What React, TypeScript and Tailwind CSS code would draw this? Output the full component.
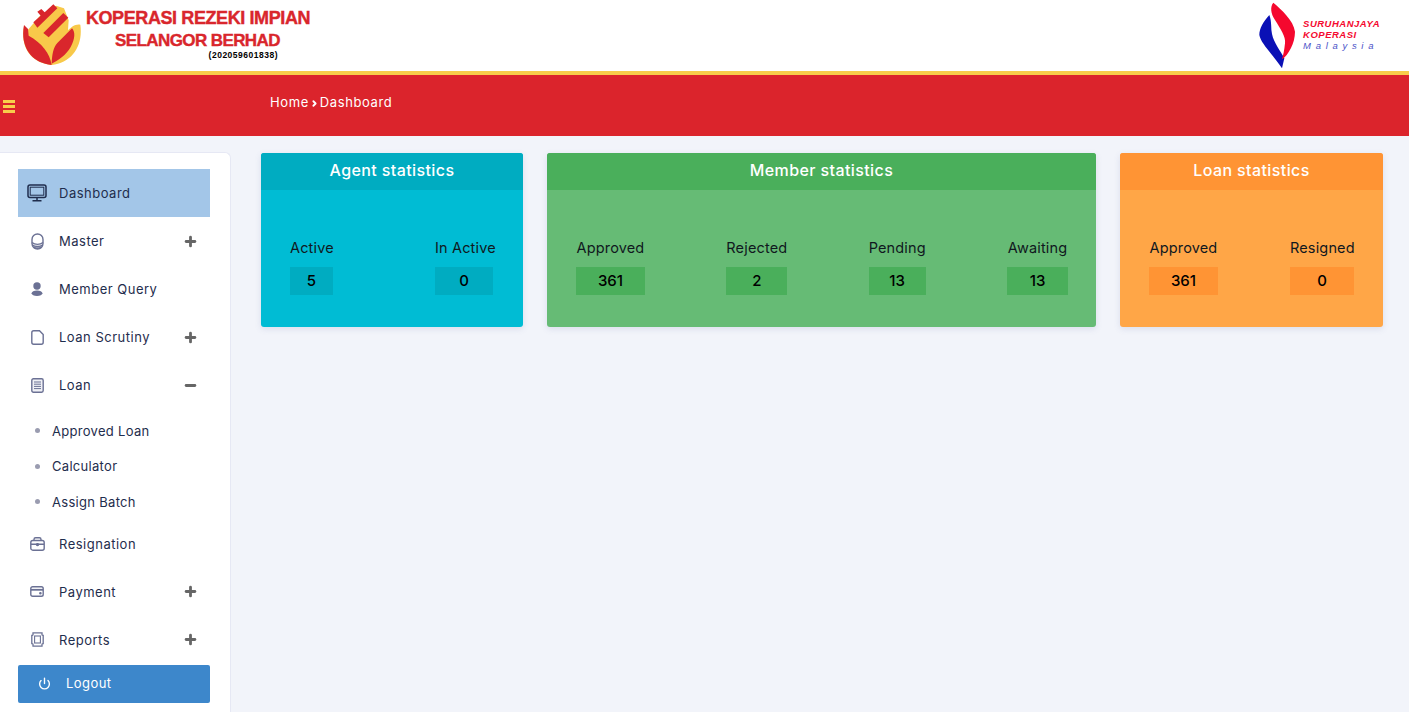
import React from "react";
import { Plus, Minus, Power, ChevronRight } from "lucide-react";

const font = "font-['Inter','Liberation_Sans',sans-serif]";

function LogoMark() {
  return (
    <svg width="60" height="64" viewBox="66 10 180 192" className="block">
      <path d="M72 78 C60 140 90 190 155 196 C215 190 250 140 241 75 C226 72 214 82 204 92 L206 62 L192 26 L168 18 L120 48 L84 90 Z" fill="#f8c94a" />
      <path d="M72 76 C60 140 92 190 155 196 C150 160 125 130 86 108 L84 88 Z" fill="#d9262c" />
      <path d="M155 192 C156 165 160 142 172 130 L216 86 C226 96 226 118 212 142 C198 166 176 182 155 192 Z" fill="#d9262c" />
      <path d="M100 68 L122 48 L112 36 L124 28 L134 38 L160 14 L172 26 L112 84 Z" fill="#d9262c" />
      <path d="M130 100 L190 40 L205 54 L146 113 Z" fill="#d9262c" />
    </svg>
  );
}

function KoperasiMark() {
  return (
    <svg width="50" height="70" viewBox="0 0 150 210" className="block">
      <path d="M58 45 C40 65 28 85 28 105 C32 130 70 165 96 205 L103 175 C90 150 72 130 66 102 C62 85 66 65 58 45 Z" fill="#0a10b5" />
      <path d="M70 8 C60 20 62 40 75 60 C90 85 108 110 105 130 C103 150 100 165 96 178 C115 165 135 130 135 95 C130 60 95 30 70 8 Z" fill="#f5082e" />
    </svg>
  );
}

const MonitorIcon = () => (
  <svg width="20" height="18" viewBox="0 0 20 18" fill="none" stroke="#1f2d4d" strokeWidth="1.5">
    <rect x="1" y="1" width="18" height="12.5" rx="2" />
    <rect x="3.2" y="3.2" width="13.6" height="8" strokeWidth="1" />
    <path d="M10 14 V16.5 M5.5 16.8 H14.5" />
  </svg>
);
const CoinIcon = () => (
  <svg width="13" height="17" viewBox="0 0 13 17" fill="none" stroke="#6b7194" strokeWidth="1.4">
    <rect x="1" y="1" width="11" height="15" rx="5.5" />
    <path d="M1 9.5 C4 12 9 12 12 9.5 M1.5 12 C4 14 9 14 11.5 12 M3 14.3 C5 15.3 8 15.3 10 14.3" />
  </svg>
);
const PersonIcon = () => (
  <svg width="12" height="14" viewBox="0 0 12 14" fill="#6b7194">
    <circle cx="6" cy="4" r="3.7" />
    <ellipse cx="6" cy="11.2" rx="5.4" ry="2.8" />
  </svg>
);
const FileIcon = () => (
  <svg width="13" height="15" viewBox="0 0 13 15" fill="none" stroke="#6b7194" strokeWidth="1.4">
    <path d="M2.7 0.8 H8.5 L12.2 4.5 V12.3 C12.2 13.4 11.4 14.2 10.3 14.2 H2.7 C1.6 14.2 0.8 13.4 0.8 12.3 V2.7 C0.8 1.6 1.6 0.8 2.7 0.8 Z" />
  </svg>
);
const DocIcon = () => (
  <svg width="13" height="15" viewBox="0 0 13 15" fill="none" stroke="#6b7194">
    <rect x="0.8" y="0.8" width="11.4" height="13.4" rx="1.6" strokeWidth="1.4" fill="#f0f1f6" />
    <path d="M3 4 H10 M3 6.2 H10 M3 8.4 H10 M3 10.6 H10" strokeWidth="1" />
  </svg>
);
const CaseIcon = () => (
  <svg width="15" height="14" viewBox="0 0 15 14" fill="none" stroke="#6b7194" strokeWidth="1.4">
    <rect x="0.8" y="3.5" width="13.4" height="9.7" rx="2" />
    <path d="M4 3.5 V2.4 C4 1.4 4.8 0.8 5.6 0.8 H9.4 C10.2 0.8 11 1.4 11 2.4 V3.5 M1 7.2 H14" />
    <circle cx="7.5" cy="7.6" r="1" fill="#6b7194" />
  </svg>
);
const CardIcon = () => (
  <svg width="14" height="11" viewBox="0 0 14 11" fill="none" stroke="#6b7194" strokeWidth="1.4">
    <rect x="0.8" y="0.8" width="12.4" height="9.4" rx="1.8" />
    <path d="M1 3.8 H13" strokeWidth="1.8" />
    <circle cx="10.4" cy="7.2" r="0.6" fill="#6b7194" />
  </svg>
);
const ReportIcon = () => (
  <svg width="13" height="15" viewBox="0 0 13 15" fill="none" stroke="#6b7194" strokeWidth="1.3">
    <path d="M2 0.8 H11 V2.8 C11 3.4 12.2 3.4 12.2 3.4 V11.6 C12.2 11.6 11 11.6 11 12.2 V14.2 H2 V12.2 C2 11.6 0.8 11.6 0.8 11.6 V3.4 C0.8 3.4 2 3.4 2 2.8 Z" />
    <rect x="3.6" y="4" width="5.8" height="7" strokeWidth="1.1" />
  </svg>
);

function NavItem({ icon, label, action, active }: { icon: React.ReactNode; label: string; action?: "plus" | "minus"; active?: boolean }) {
  return (
    <div className={`h-12 flex items-center pl-[9px] pr-[12px] text-[13px] tracking-[0.5px] text-[#1f2d4d] ${active ? "bg-[#a3c6e8]" : ""}`}>
      <span className="w-[20px] mr-[12px] flex justify-center">{icon}</span>
      <span className="flex-1 pt-[2px]">{label}</span>
      {action === "plus" && <Plus size={15} strokeWidth={4.5} className="text-[#666666]" />}
      {action === "minus" && <Minus size={15} strokeWidth={4.5} className="text-[#666666]" />}
    </div>
  );
}

function SubItem({ label, height }: { label: string; height: string }) {
  return (
    <div className={`flex items-center pl-[17px] text-[13px] tracking-[0.3px] text-[#1f2d4d] ${height}`}>
      <span className="w-[5px] h-[5px] rounded-full bg-[#9a9cb0] mr-[12px]" />
      <span className="pt-[2px]">{label}</span>
    </div>
  );
}

function Stat({ label, value, box }: { label: string; value: string; box: string }) {
  return (
    <div className="flex flex-col items-stretch">
      <div className="text-[14.5px] tracking-[0.15px] text-[#101820] text-center whitespace-nowrap leading-[22px]">{label}</div>
      <div className={`mt-[8px] h-[28px] flex items-center justify-center text-[15px] font-medium text-black ${box}`}>{value}</div>
    </div>
  );
}

function Card({ title, head, body, box, width, pad, stats }: { title: string; head: string; body: string; box: string; width: string; pad: string; stats: [string, string, string][] }) {
  return (
    <div className={`${width} h-[174px] rounded-[3px] overflow-hidden shadow-[0_2px_6px_rgba(90,100,160,0.15)] ${body}`}>
      <div className={`h-[37px] flex items-center justify-center text-white text-[16px] tracking-[0.4px] font-medium pb-[3px] ${head}`}>{title}</div>
      <div className={`flex justify-between pl-[29px] pt-[47px] ${pad}`}>
        {stats.map(([label, value, w]) => (
          <div key={label} className={w}>
            <Stat label={label} value={value} box={box} />
          </div>
        ))}
      </div>
    </div>
  );
}

export default function App() {
  return (
    <div className={`w-[1409px] h-[712px] overflow-hidden bg-[#f2f4fa] ${font}`}>
      <header className="h-[71px] bg-white flex items-start justify-between pl-[22px] pr-[29px]">
        <div className="flex items-start pt-[3px]">
          <LogoMark />
          <div className="ml-[4px] w-[226px] pt-[5px] flex flex-col items-center font-['Liberation_Sans',sans-serif] font-bold text-[#d9262c]">
            <div className="text-[18px] leading-[21.5px] whitespace-nowrap tracking-[-0.4px] mr-[2px] [-webkit-text-stroke:0.4px_#d9262c]">KOPERASI REZEKI IMPIAN</div>
            <div className="text-[17px] leading-[21.5px] whitespace-nowrap tracking-[-0.6px] mr-[3px] [-webkit-text-stroke:0.4px_#d9262c]">SELANGOR BERHAD</div>
            <div className="text-[8.5px] leading-[9px] text-black self-end mr-[34px] tracking-[0.5px]">(202059601838)</div>
          </div>
        </div>
        <div className="flex items-start">
          <KoperasiMark />
          <div className="ml-[3px] pt-[18px] text-[9.5px] leading-[11px] font-bold italic font-['Liberation_Sans',sans-serif] text-[#f5082e]">
            <div className="tracking-[0.5px]">SURUHANJAYA</div>
            <div className="tracking-[0.5px]">KOPERASI</div>
            <div className="font-normal text-[#4a52c8] tracking-[4.7px]">Malaysia</div>
          </div>
        </div>
      </header>
      <div className="h-[4px] bg-[#f8cd4b]" />
      <div className="h-[61px] bg-[#db242c] flex items-center text-white">
        <div className="w-[270px] pl-[3px] pt-[2px] flex flex-col gap-[2px]">
          <span className="block w-[12px] h-[3px] bg-[#f8cd4b]" />
          <span className="block w-[12px] h-[3px] bg-[#f8cd4b]" />
          <span className="block w-[12px] h-[3px] bg-[#f8cd4b]" />
        </div>
        <div className="text-[13px] tracking-[0.6px] flex items-center pb-[5px]">
          Home
          <ChevronRight size={9} strokeWidth={5} className="mx-[1px]" />
          Dashboard
        </div>
      </div>
      <div className="flex pt-[16px]">
        <aside className="w-[231px] h-[580px] shrink-0 bg-white rounded-tr-[6px] border-r border-t border-[#e6e8f4] pl-[18px] pr-[20px] pt-[16px] flex flex-col">
          <NavItem icon={<MonitorIcon />} label="Dashboard" active />
          <NavItem icon={<CoinIcon />} label="Master" action="plus" />
          <NavItem icon={<PersonIcon />} label="Member Query" />
          <NavItem icon={<FileIcon />} label="Loan Scrutiny" action="plus" />
          <NavItem icon={<DocIcon />} label="Loan" action="minus" />
          <div className="pt-[4px]">
            <SubItem label="Approved Loan" height="h-[35px]" />
            <SubItem label="Calculator" height="h-[36px]" />
            <SubItem label="Assign Batch" height="h-[35.5px]" />
          </div>
          <NavItem icon={<CaseIcon />} label="Resignation" />
          <NavItem icon={<CardIcon />} label="Payment" action="plus" />
          <NavItem icon={<ReportIcon />} label="Reports" action="plus" />
          <div className="h-[38px] bg-[#3d87cb] rounded-[2px] flex items-center text-white text-[13px] tracking-[0.45px] pl-[20px] mt-[1px]">
            <Power size={13} strokeWidth={2.5} className="mr-[15px]" />
            Logout
          </div>
        </aside>
        <main className="flex gap-[24px] pl-[30px] pt-[1px]">
          <Card title="Agent statistics" head="bg-[#00acc1]" body="bg-[#00bcd4]" box="bg-[#00acc1]" width="w-[262px]" pad="pr-[30px]"
            stats={[["Active", "5", "w-[43px]"], ["In Active", "0", "w-[58px]"]]} />
          <Card title="Member statistics" head="bg-[#4aaf5b]" body="bg-[#66bb75]" box="bg-[#4aaf5b]" width="w-[549px]" pad="pr-[28px]"
            stats={[["Approved", "361", "w-[69px]"], ["Rejected", "2", "w-[61px]"], ["Pending", "13", "w-[57px]"], ["Awaiting", "13", "w-[61px]"]]} />
          <Card title="Loan statistics" head="bg-[#ff9434]" body="bg-[#ffa647]" box="bg-[#ff9434]" width="w-[263px]" pad="pr-[29px]"
            stats={[["Approved", "361", "w-[69px]"], ["Resigned", "0", "w-[64px]"]]} />
        </main>
      </div>
    </div>
  );
}
